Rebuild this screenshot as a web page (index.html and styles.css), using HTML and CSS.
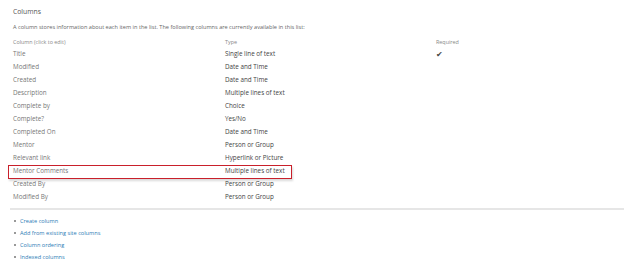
FILE: index.html
```html
<!DOCTYPE html>
<html lang="en">
<head>
    <meta charset="UTF-8">
    <title>Columns</title>
    <link rel="stylesheet" href="styles.css">
</head>
<body>
    <div class="section">
        <div class="section-title">Columns</div>
        <p class="intro">A column stores information about each item in the list. The following columns are currently available in this list:</p>

        <table class="columns">
            <thead>
                <tr>
                    <th class="col-name">Column (click to edit)</th>
                    <th class="col-type">Type</th>
                    <th class="col-req">Required</th>
                </tr>
            </thead>
            <tbody>
                <tr><td>Title</td><td>Single line of text</td><td class="check">&#10004;</td></tr>
                <tr><td>Modified</td><td>Date and Time</td><td></td></tr>
                <tr><td>Created</td><td>Date and Time</td><td></td></tr>
                <tr><td>Description</td><td>Multiple lines of text</td><td></td></tr>
                <tr><td>Complete by</td><td>Choice</td><td></td></tr>
                <tr><td>Complete?</td><td>Yes/No</td><td></td></tr>
                <tr><td>Completed On</td><td>Date and Time</td><td></td></tr>
                <tr><td>Mentor</td><td>Person or Group</td><td></td></tr>
                <tr><td>Relevant link</td><td>Hyperlink or Picture</td><td></td></tr>
                <tr class="highlight"><td>Mentor Comments</td><td>Multiple lines of text</td><td></td></tr>
                <tr><td>Created By</td><td>Person or Group</td><td></td></tr>
                <tr><td>Modified By</td><td>Person or Group</td><td></td></tr>
            </tbody>
        </table>

        <div class="divider"></div>

        <ul class="links">
            <li><a href="#">Create column</a></li>
            <li><a href="#">Add from existing site columns</a></li>
            <li><a href="#">Column ordering</a></li>
            <li><a href="#">Indexed columns</a></li>
        </ul>
    </div>
</body>
</html>
```

FILE: styles.css
```css
body {
    margin: 0;
    background: #fff;
    font-family: "Open Sans", "Noto Sans", sans-serif;
    font-size: 6.3px;
    color: #444;
}
.section {
    padding: 7px 0 0 13px;
}
.section-title {
    color: #555;
    font-size: 6.8px;
    line-height: 10px;
}
.intro {
    margin: 5px 0 0;
    color: #666;
    font-size: 5.6px;
    line-height: 10px;
}
.columns {
    border-collapse: collapse;
    table-layout: fixed;
    margin-top: 5px;
}
.columns th {
    font-weight: normal;
    text-align: left;
    color: #888;
    font-size: 5.4px;
    line-height: 10px;
    padding: 0;
}
.col-name {
    width: 212px;
}
.col-type {
    width: 211px;
}
.col-req {
    width: 60px;
}
.columns td {
    padding: 0;
    height: 13px;
    line-height: 13px;
    color: #444;
    white-space: nowrap;
}
.columns td:first-child {
    color: #777;
}
.check {
    color: #1a1a1a;
    font-size: 8px;
}
.highlight td:first-child {
    position: relative;
}
.highlight td:first-child::after {
    content: "";
    position: absolute;
    left: -5px;
    top: 1px;
    width: 282px;
    height: 12px;
    border: 1px solid #c9202b;
    box-shadow: 1px 2px 2px rgba(0,0,0,0.15);
}
.divider {
    height: 2px;
    background: #e6e6e6;
    margin: 5px 0 0 -3px;
}
.links {
    list-style: none;
    margin: 5px 0 0;
    padding: 0 0 0 1px;
}
.links li {
    line-height: 12px;
    font-size: 5.6px;
}
.links li::before {
    content: "";
    display: inline-block;
    width: 2px;
    height: 2px;
    background: #999;
    margin: 0 4px 1px 0;
    vertical-align: middle;
}
.links a {
    color: #2b7bb5;
    text-decoration: none;
}
```
